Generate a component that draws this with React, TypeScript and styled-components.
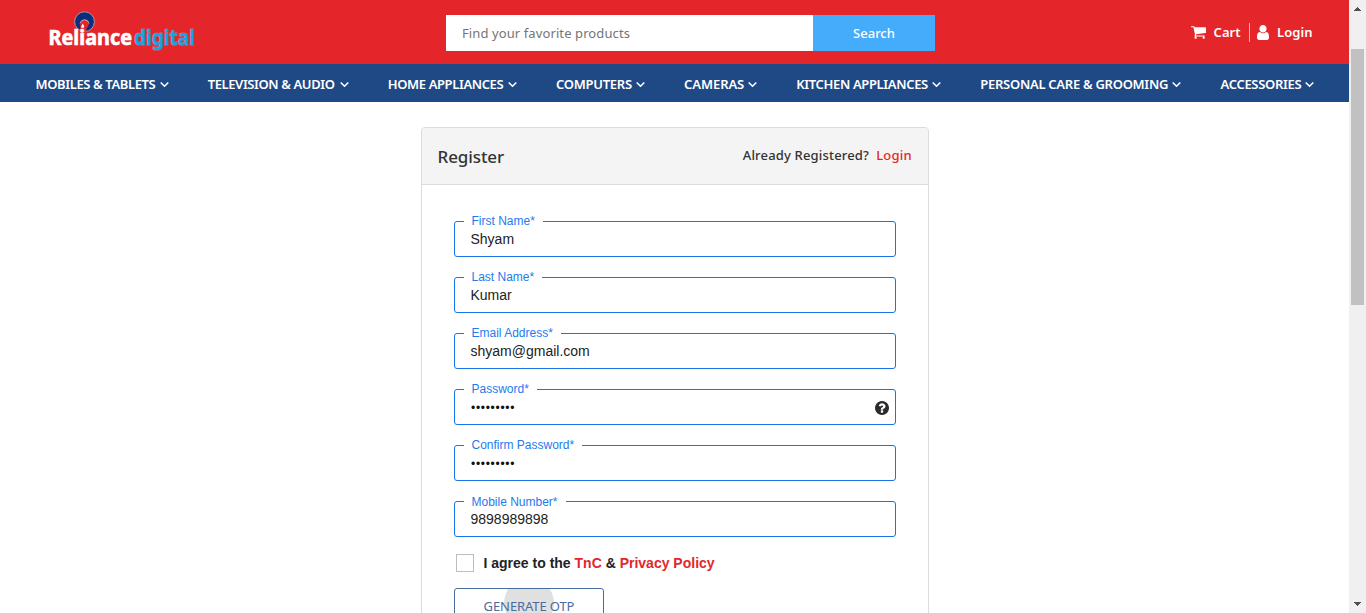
import React from "react";
import styled, { createGlobalStyle } from "styled-components";

const ui = `"Noto Sans", "Open Sans", sans-serif`;
const arial = `"Liberation Sans", Arial, sans-serif`;

const GlobalStyle = createGlobalStyle`
  * { box-sizing: border-box; }
  body { margin: 0; background: #fff; overflow: hidden; font-family: ${ui}; }
`;

const Page = styled.div`
  display: flex;
  width: 1366px;
  height: 613px;
  overflow: hidden;
`;
const Content = styled.div`
  width: 1349px;
  height: 613px;
  overflow: hidden;
`;
const Text = styled.span<{ $ls?: number }>`
  letter-spacing: ${(p) => p.$ls ?? 0}px;
  white-space: pre;
`;

const Header = styled.header`
  display: flex;
  align-items: flex-start;
  height: 64px;
  background: #e4262b;
`;
const Logo = styled.svg`
  display: block;
  width: 160px;
  height: 56px;
  margin-left: 44px;
`;
const SearchForm = styled.div`
  display: flex;
  width: 489px;
  height: 36px;
  margin: 15px 0 0 242px;
`;
const SearchBox = styled.div`
  width: 367px;
  padding-left: 16px;
  background: #fff;
  color: #757575;
  font-size: 13px;
  line-height: 37px;
`;
const SearchButton = styled.div`
  flex: 1;
  background: #45acfb;
  color: #fff;
  font-size: 13px;
  font-weight: 500;
  line-height: 37px;
  text-align: center;
`;
const Account = styled.div`
  display: flex;
  align-items: center;
  height: 20px;
  margin: 22px 0 0 256px;
  color: #fff;
  font-size: 13px;
  font-weight: 600;
  line-height: 20px;
`;
const AccountLink = styled.span<{ $gap: number; $width: number }>`
  display: flex;
  align-items: center;
  gap: ${(p) => p.$gap}px;
  width: ${(p) => p.$width}px;
`;
const Divider = styled.span`
  width: 1px;
  height: 19px;
  margin: 0 7px 0 8px;
  background: #f3b0b2;
`;

const Nav = styled.nav`
  display: flex;
  justify-content: space-between;
  height: 38px;
  padding: 2px 34.5px 0 35.5px;
  background: #1f4985;
`;
const NavItem = styled.div<{ $width: number }>`
  display: flex;
  align-items: center;
  justify-content: space-between;
  width: ${(p) => p.$width}px;
  color: #fff;
  font-size: 13px;
  font-weight: 600;
  line-height: 20px;
`;

const Card = styled.section`
  width: 508px;
  height: 520px;
  margin: 25px 0 0 421px;
  border: 1px solid #dcdcdc;
  border-radius: 4px;
`;
const CardHeader = styled.div`
  display: flex;
  justify-content: space-between;
  height: 57px;
  padding: 0 16px 0 15.5px;
  border-bottom: 1px solid #dcdcdc;
  border-radius: 3px 3px 0 0;
  background: #f4f4f4;
  color: #333;
`;
const Title = styled.h1`
  margin: 0;
  font-size: 17px;
  font-weight: 500;
  line-height: 58px;
`;
const Already = styled.div`
  font-size: 13px;
  font-weight: 500;
  line-height: 55px;
`;
const Red = styled.span`
  color: #e4262b;
`;
const CardBody = styled.div`
  padding: 36px 32px 0;
`;
const Field = styled.div`
  position: relative;
  display: flex;
  align-items: center;
  justify-content: space-between;
  height: 36px;
  margin-bottom: 20px;
  padding: 0 6px 0 15.5px;
  border: 1px solid #1a73e8;
  border-radius: 3px;
`;
const Label = styled.span<{ $width: number; $drop: number }>`
  position: absolute;
  top: ${(p) => -9 + p.$drop}px;
  left: 9px;
  width: ${(p) => p.$width}px;
  padding-left: 7.5px;
  background: #fff;
  color: #1f7aee;
  font-family: ${arial};
  font-size: 12px;
  line-height: 16px;
`;
const Value = styled.span`
  color: #222;
  font-family: ${arial};
  font-size: 14px;
  line-height: 34px;
`;
const Dots = styled(Value)`
  padding: 2px 0 0 0.5px;
  color: #111;
  font-size: 12px;
  letter-spacing: 0.7px;
`;
const HelpSvg = styled.svg`
  margin-top: 2px;
`;
const Agree = styled.div`
  display: flex;
  align-items: center;
  height: 18px;
  margin: -3px 0 0 2px;
  color: #222;
  font-family: ${arial};
  font-size: 14px;
  font-weight: 700;
`;
const Checkbox = styled.span`
  width: 18px;
  height: 18px;
  margin-right: 9.5px;
  border: 1px solid #bdbdbd;
`;
const OtpButton = styled.div`
  position: relative;
  width: 150px;
  height: 38px;
  margin-top: 16px;
  border: 1px solid #4b6a9e;
  border-radius: 3px;
  color: #4b6a9e;
  font-size: 13px;
  line-height: 35px;
  text-align: center;
  overflow: hidden;
`;
const Ripple = styled.span`
  position: absolute;
  top: -11px;
  left: 49px;
  width: 50px;
  height: 50px;
  border-radius: 50%;
  background: #e0e0e0;
`;
const OtpText = styled(Text)`
  position: relative;
`;

const Scrollbar = styled.div`
  display: flex;
  flex-direction: column;
  align-items: center;
  justify-content: space-between;
  width: 17px;
  height: 613px;
  background: #f0f0f0;
`;
const Thumb = styled.div`
  width: 13px;
  height: 256px;
  margin: 32px 0 auto;
  background: #c1c1c1;
`;

const Arrow = ({ down }: { down?: boolean }) => (
  <svg width="17" height="17" viewBox="0 0 17 17" shapeRendering="crispEdges">
    <path d={down ? "M5 6h7L8.5 10z" : "M5 11h7L8.5 7z"} fill="#505050" />
  </svg>
);
const Chevron = () => (
  <svg width="9" height="9" viewBox="0 0 9 9">
    <path d="M0.7 2.5 4.5 6.2 8.3 2.5" fill="none" stroke="#fff" strokeWidth="1.6" />
  </svg>
);
const CartIcon = () => (
  <svg width="15" height="13" viewBox="64 256 1664 1408">
    <path
      fill="#fff"
      d="M704 1536q0 52-38 90t-90 38-90-38-38-90 38-90 90-38 90 38 38 90zm896 0q0 52-38 90t-90 38-90-38-38-90 38-90 90-38 90 38 38 90zm128-1088v512q0 24-16.5 42.5t-40.5 21.5l-1044 122q13 60 13 70 0 16-24 64h920q26 0 45 19t19 45-19 45-45 19h-1024q-26 0-45-19t-19-45q0-11 8-31.5t16-36 21.5-40 15.5-29.5l-177-823h-204q-26 0-45-19t-19-45 19-45 45-19h256q16 0 28.5 6.5t19.5 15.5 13 24.5 8 26 5.5 29.5 4.5 26h1201q26 0 45 19t19 45z"
    />
  </svg>
);
const UserIcon = () => (
  <svg width="12" height="15" viewBox="0 0 1280 1536" preserveAspectRatio="none">
    <path
      fill="#fff"
      d="M1280 1271q0 109-62.5 187t-150.5 78h-854q-88 0-150.5-78t-62.5-187q0-85 8.5-160.5t31.5-152 58.5-131 94-89 134.5-34.5q131 128 313 128t313-128q76 0 134.5 34.5t94 89 58.5 131 31.5 152 8.5 160.5zM1024 384q0 159-112.5 271.5t-271.5 112.5-271.5-112.5-112.5-271.5 112.5-271.5 271.5-112.5 271.5 112.5 112.5 271.5z"
    />
  </svg>
);
const HelpIcon = () => (
  <HelpSvg width="14" height="14" viewBox="128 128 1536 1536">
    <path
      fill="#2b2b2b"
      d="M1024 1376v-192q0-14-9-23t-23-9h-192q-14 0-23 9t-9 23v192q0 14 9 23t23 9h192q14 0 23-9t9-23zm256-672q0-88-55.5-163t-138.5-116-170-41q-243 0-371 213-15 24 8 42l132 100q7 6 19 6 16 0 25-12 53-68 86-92 34-24 86-24 48 0 85.5 26t37.5 59q0 38-20 61t-68 45q-63 28-115.5 86.5t-52.5 125.5v36q0 14 9 23t23 9h192q14 0 23-9t9-23q0-19 21.5-49.5t54.5-49.5q32-18 49-28.5t46-35 44.5-48 28-60.5 12.5-81zm384 192q0 209-103 385.5t-279.5 279.5-385.5 103-385.5-103-279.5-279.5-103-385.5 103-385.5 279.5-279.5 385.5-103 385.5 103 279.5 279.5 103 385.5z"
    />
  </HelpSvg>
);

const menu: { name: string; width: number; ls: number }[] = [
  { name: "MOBILES & TABLETS", width: 133, ls: -0.38 },
  { name: "TELEVISION & AUDIO", width: 141, ls: -0.39 },
  { name: "HOME APPLIANCES", width: 129, ls: -0.38 },
  { name: "COMPUTERS", width: 89, ls: -0.26 },
  { name: "CAMERAS", width: 73, ls: -0.07 },
  { name: "KITCHEN APPLIANCES", width: 145, ls: -0.34 },
  { name: "PERSONAL CARE & GROOMING", width: 201, ls: -0.28 },
  { name: "ACCESSORIES", width: 94, ls: -0.3 },
];

const fields: {
  label: string;
  value: string;
  gap: number;
  drop?: number;
  secret?: boolean;
  help?: boolean;
}[] = [
  { label: "First Name*", value: "Shyam", gap: 79 },
  { label: "Last Name*", value: "Kumar", gap: 78 },
  { label: "Email Address*", value: "shyam@gmail.com", gap: 97 },
  { label: "Password*", value: "•••••••••", gap: 73, secret: true, help: true },
  { label: "Confirm Password*", value: "•••••••••", gap: 118, secret: true },
  { label: "Mobile Number*", value: "9898989898", gap: 102, drop: 1 },
];

export default function App() {
  return (
    <Page>
      <GlobalStyle />
      <Content>
        <Header>
          <Logo viewBox="0 0 160 56">
            <circle cx="40.5" cy="21.7" r="9.9" fill="#0b2f7c" stroke="#c9a9bd" strokeWidth="0.8" />
            <path d="M36.2 31.5v-7.700a4.400 4.400 0 0 1 8.800-.4c0 1.800-1 3-2.500 4.500v3.600z" fill="#e4262b" />
            <path d="M36 23.500a4.600 4.600 0 0 1 9 0" fill="none" stroke="#dcb4c2" strokeWidth="0.8" />
            <path d="M38.600 23.500c1.300 1.800 1.700 2.800 1.400 4.300h-2.800c-.1-1.600.8-2.600 1.400-4.300z" fill="#fff" />
            <text x="4.500" y="45" textLength="83.500" lengthAdjust="spacingAndGlyphs" fill="#fff" stroke="#fff" strokeWidth="0.600" fontFamily="Noto Sans, sans-serif" fontSize="20.500" fontWeight="700">Reliance</text>
            <text x="90" y="45" textLength="61" lengthAdjust="spacingAndGlyphs" fill="#0fa6e4" stroke="#c56c86" strokeWidth="1.200" paintOrder="stroke" fontFamily="Noto Sans, sans-serif" fontSize="21.500" fontWeight="700">digital</text>
          </Logo>
          <SearchForm>
            <SearchBox><Text $ls={0.1}>Find your favorite products</Text></SearchBox>
            <SearchButton><Text>Search</Text></SearchButton>
          </SearchForm>
          <Account>
            <AccountLink $gap={7.5} $width={50}>
              <CartIcon />
              <Text $ls={0.1}>Cart</Text>
            </AccountLink>
            <Divider />
            <AccountLink $gap={8} $width={56}>
              <UserIcon />
              <Text $ls={0.1}>Login</Text>
            </AccountLink>
          </Account>
        </Header>
        <Nav>
          {menu.map((m) => (
            <NavItem key={m.name} $width={m.width}>
              <Text $ls={m.ls}>{m.name}</Text>
              <Chevron />
            </NavItem>
          ))}
        </Nav>
        <Card>
          <CardHeader>
            <Title><Text $ls={-0.1}>Register</Text></Title>
            <Already>
              <Text $ls={0.17}>Already Registered?  </Text>
              <Red><Text $ls={0.25}>Login</Text></Red>
            </Already>
          </CardHeader>
          <CardBody>
            {fields.map((f) => (
              <Field key={f.label}>
                <Label $width={f.gap} $drop={f.drop ?? 0}>{f.label}</Label>
                {f.secret ? <Dots>{f.value}</Dots> : <Value>{f.value}</Value>}
                {f.help && <HelpIcon />}
              </Field>
            ))}
            <Agree>
              <Checkbox />
              <Text>I agree to the <Red>TnC</Red> &amp; <Red>Privacy Policy</Red></Text>
            </Agree>
            <OtpButton>
              <Ripple />
              <OtpText $ls={-0.1}>GENERATE OTP</OtpText>
            </OtpButton>
          </CardBody>
        </Card>
      </Content>
      <Scrollbar>
        <Arrow />
        <Thumb />
        <Arrow down />
      </Scrollbar>
    </Page>
  );
}
